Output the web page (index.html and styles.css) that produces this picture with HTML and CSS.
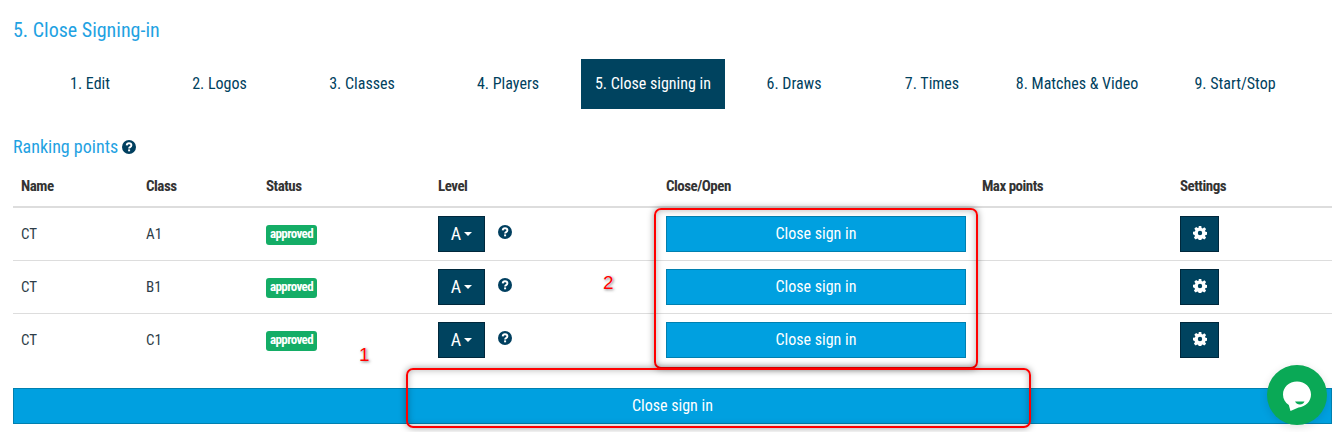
FILE: index.html
```html
<!DOCTYPE html>
<html lang="en">
<head>
<meta charset="utf-8">
<title>Close Signing-in</title>
<link rel="stylesheet" href="styles.css">
</head>
<body>
<svg class="defs" width="0" height="0" aria-hidden="true">
  <symbol id="help" viewBox="0 0 14 14">
    <circle cx="7" cy="7" r="7" fill="#003f5f"/>
    <path d="M4.7 5.4C4.8 4 5.800 3.300 7 3.300c1.300 0 2.400.8 2.400 2 0 1.900-2.300 1.700-2.300 3.100" fill="none" stroke="#fff" stroke-width="1.900"/>
    <rect x="6.100" y="9.400" width="2" height="1.900" fill="#fff"/>
  </symbol>
  <symbol id="gear" viewBox="0 0 14 14">
    <path fill="#fff" fill-rule="evenodd" d="M5.700 0h2.600l.3 1.900 1.100.5L11.300 1.300l1.800 1.800-1.100 1.600.5 1.100 1.900.3v2.600l-1.900.3-.5 1.100 1.100 1.600-1.800 1.800-1.600-1.100-1.100.5-.3 1.900H5.700l-.3-1.900-1.100-.5-1.600 1.100-1.800-1.800 1.100-1.600-.5-1.100L0 8.300V5.700l1.900-.3.500-1.100-1.100-1.600 1.800-1.800 1.600 1.100 1.100-.5zM7 4.800a2.200 2.200 0 1 0 0 4.400 2.200 2.200 0 0 0 0-4.400z"/>
  </symbol>
</svg>

<h1 class="page-title">5. Close Signing-in</h1>

<nav class="steps">
  <a class="step">1. Edit</a>
  <a class="step">2. Logos</a>
  <a class="step">3. Classes</a>
  <a class="step">4. Players</a>
  <a class="step step-active">5. Close signing in</a>
  <a class="step">6. Draws</a>
  <a class="step">7. Times</a>
  <a class="step">8. Matches &amp; Video</a>
  <a class="step">9. Start/Stop</a>
</nav>

<h2 class="section-title">Ranking points <svg class="help help-title"><use href="#help"/></svg></h2>

<table class="classes">
  <colgroup>
    <col class="c-name"><col class="c-class"><col class="c-status"><col class="c-level"><col class="c-close"><col class="c-max"><col class="c-settings">
  </colgroup>
  <thead>
    <tr><th>Name</th><th>Class</th><th>Status</th><th>Level</th><th>Close/Open</th><th>Max points</th><th>Settings</th></tr>
  </thead>
  <tbody>
    <tr>
      <td>CT</td><td>A1</td><td><span class="badge">approved</span></td>
      <td><div class="level"><button class="btn-dark">A<i class="caret"></i></button><svg class="help"><use href="#help"/></svg></div></td>
      <td><button class="btn-blue btn-close">Close sign in</button></td><td></td>
      <td><button class="btn-dark btn-gear"><svg class="gear"><use href="#gear"/></svg></button></td>
    </tr>
    <tr>
      <td>CT</td><td>B1</td><td><span class="badge">approved</span></td>
      <td><div class="level"><button class="btn-dark">A<i class="caret"></i></button><svg class="help"><use href="#help"/></svg></div></td>
      <td><button class="btn-blue btn-close">Close sign in</button></td><td></td>
      <td><button class="btn-dark btn-gear"><svg class="gear"><use href="#gear"/></svg></button></td>
    </tr>
    <tr>
      <td>CT</td><td>C1</td><td><span class="badge">approved</span></td>
      <td><div class="level"><button class="btn-dark">A<i class="caret"></i></button><svg class="help"><use href="#help"/></svg></div></td>
      <td><button class="btn-blue btn-close">Close sign in</button></td><td></td>
      <td><button class="btn-dark btn-gear"><svg class="gear"><use href="#gear"/></svg></button></td>
    </tr>
  </tbody>
</table>

<button class="btn-blue btn-all">Close sign in</button>

<div class="mark mark-box-2"></div>
<div class="mark mark-box-1"></div>
<span class="mark-num mark-num-1">1</span>
<span class="mark-num mark-num-2">2</span>

<div class="chat">
  <svg width="30" height="32" viewBox="0 0 30 32">
    <path fill="#fff" d="M15 1.500C6.900 1.500 1 7.300 1 14.500c0 4.600 2.200 8.200 5.800 10.500L8.500 31l8-3.600C23.800 26.800 29 21.300 29 14.500 29 7.300 23.100 1.500 15 1.500z"/>
    <path fill="#0aa956" d="M13 21.500h9.500c-.8 2-2.500 3-4.600 3-2.200 0-3.900-1-4.900-3z"/>
  </svg>
</div>
</body>
</html>
```
FILE: styles.css
```css
* { box-sizing: border-box; }
html, body { margin: 0; padding: 0; }
body {
  position: relative;
  width: 1334px;
  height: 432px;
  overflow: hidden;
  padding: 20px 2px 0 13px;
  background: #fff;
  font-family: "Roboto Condensed", Roboto, "Liberation Sans Narrow", sans-serif;
  font-stretch: 75%;
  color: #333;
}
.defs { position: absolute; }
.page-title {
  margin: 0;
  font-size: 20px;
  line-height: 21px;
  font-weight: 400;
  color: #1fa2e2;
}
.steps {
  display: grid;
  grid-template-columns: 120px 139px 146px 146px 144px 138px 138px 152px 164px;
  margin: 18px 0 0 17px;
  height: 50px;
}
.step {
  display: flex;
  align-items: center;
  justify-content: center;
  padding-bottom: 2px;
  font-size: 16px;
  color: #00415e;
  white-space: nowrap;
}
.step-active { background: #00435f; color: #fff; }
.section-title {
  margin: 28px 0 0;
  height: 20px;
  font-size: 18px;
  line-height: 20px;
  font-weight: 400;
  color: #1fa2e2;
  display: flex;
  align-items: center;
  gap: 4px;
}
.help { width: 14px; height: 14px; display: block; }
.classes {
  table-layout: fixed;
  border-collapse: collapse;
  width: 1319px;
  margin-top: 9px;
  font-size: 15px;
}
.c-name { width: 125px; }
.c-class { width: 120px; }
.c-status { width: 172px; }
.c-level { width: 228px; }
.c-close { width: 316px; }
.c-max { width: 198px; }
.c-settings { width: 160px; }
.classes th {
  height: 41px;
  padding: 0 8px;
  text-align: left;
  font-weight: 700;
  letter-spacing: -.5px;
  color: #333;
  border-bottom: 2px solid #ddd;
}
.classes td {
  height: 53px;
  padding: 0 8px;
  color: #2e3d49;
  border-bottom: 1px solid #ddd;
  vertical-align: middle;
}
.classes tr:last-child td { border-bottom: 0; }
.badge {
  display: inline-block;
  width: 51px;
  height: 20px;
  margin-top: 2px;
  border-radius: 3px;
  background: #14ad66;
  color: #fff;
  font-size: 13px;
  font-weight: 700;
  letter-spacing: -.6px;
  line-height: 18px;
  text-align: center;
  vertical-align: middle;
}
.level { display: flex; align-items: center; gap: 13px; }
.level .help { margin-top: -3px; }
button { font: inherit; cursor: pointer; }
.btn-dark {
  display: flex;
  align-items: center;
  justify-content: center;
  width: 47px;
  height: 36px;
  padding: 0;
  border: 1px solid #00283c;
  background: #00435f;
  color: #fff;
  font-size: 18px;
}
.caret {
  width: 0;
  height: 0;
  margin-left: 3px;
  border-top: 4px solid #fff;
  border-left: 4px solid transparent;
  border-right: 4px solid transparent;
}
.btn-gear { width: 39px; padding-bottom: 1px; }
.gear { width: 14px; height: 14px; display: block; }
.btn-blue {
  display: block;
  height: 36px;
  padding: 0;
  border: 1px solid #0080b0;
  background: #00a0e0;
  color: #fff;
  font-size: 16px;
}
.btn-close { width: 300px; }
.btn-all { width: 1319px; margin-top: 22px; padding-bottom: 1px; }
.mark {
  position: absolute;
  border: 2px solid #f00;
  border-radius: 7px;
  box-shadow: 0 0 7px rgba(0,0,0,.4), inset 0 0 7px rgba(0,0,0,.3);
}
.mark-box-2 { left: 654px; top: 208px; width: 324px; height: 161px; }
.mark-box-1 { left: 406px; top: 368px; width: 625px; height: 60px; }
.mark-num {
  position: absolute;
  font-family: "Liberation Sans", sans-serif;
  font-stretch: normal;
  font-size: 19px;
  line-height: 20px;
  color: #f00;
  text-shadow: 0 0 1px #fff, 1px 1px 3px rgba(0,0,0,.55);
}
.mark-num-1 { left: 359px; top: 345px; }
.mark-num-2 { left: 603px; top: 273px; }
.chat {
  position: absolute;
  left: 1267px;
  top: 365px;
  width: 60px;
  height: 60px;
  border-radius: 50%;
  background: #0aa956;
  box-shadow: 0 2px 8px rgba(0,0,0,.12);
  display: flex;
  align-items: center;
  justify-content: center;
  padding-top: 2px;
}
```
